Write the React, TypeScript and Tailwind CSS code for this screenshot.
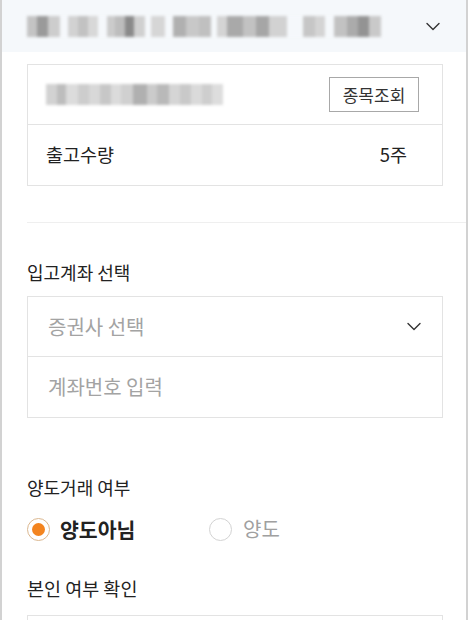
import React from "react";

type Cell = { w: number; c: string };

const headerCells: Cell[] = [
  { w: 9, c: "bg-[#c4c4c4]" }, { w: 10, c: "bg-[#9a9a9a]" }, { w: 11, c: "bg-[#cdcdcd]" }, { w: 8, c: "bg-[#f5f8fb]" },
  { w: 9, c: "bg-[#d2d2d2]" }, { w: 9, c: "bg-[#c2c2c2]" }, { w: 9, c: "bg-[#d8d8d8]" }, { w: 8, c: "bg-[#f5f8fb]" },
  { w: 8, c: "bg-[#cbcbcb]" }, { w: 9, c: "bg-[#bdbdbd]" }, { w: 8, c: "bg-[#8a8a8a]" }, { w: 10, c: "bg-[#d0d0d0]" }, { w: 6, c: "bg-[#f5f8fb]" },
  { w: 13, c: "bg-[#d6d6d6]" }, { w: 7, c: "bg-[#f5f8fb]" },
  { w: 12, c: "bg-[#b0b0b0]" }, { w: 12, c: "bg-[#c8c8c8]" }, { w: 11, c: "bg-[#c0c0c0]" }, { w: 5, c: "bg-[#f5f8fb]" },
  { w: 10, c: "bg-[#d4d4d4]" }, { w: 14, c: "bg-[#a9a9a9]" }, { w: 12, c: "bg-[#c2c2c2]" }, { w: 12, c: "bg-[#a6a6a6]" }, { w: 17, c: "bg-[#d2d2d2]" }, { w: 14, c: "bg-[#f5f8fb]" },
  { w: 11, c: "bg-[#c6c6c6]" }, { w: 10, c: "bg-[#d4d4d4]" }, { w: 8, c: "bg-[#f5f8fb]" },
  { w: 12, c: "bg-[#c2c2c2]" }, { w: 10, c: "bg-[#ababab]" }, { w: 10, c: "bg-[#939393]" }, { w: 11, c: "bg-[#c9c9c9]" },
];

const cardCells: Cell[] = [
  { w: 11, c: "bg-[#d2d2d2]" }, { w: 9, c: "bg-[#bdbdbd]" }, { w: 12, c: "bg-[#dcdcdc]" }, { w: 11, c: "bg-[#cdcdcd]" },
  { w: 11, c: "bg-[#d8d8d8]" }, { w: 11, c: "bg-[#c7c7c7]" }, { w: 10, c: "bg-[#dbdbdb]" }, { w: 12, c: "bg-[#d0d0d0]" },
  { w: 14, c: "bg-[#b0b0b0]" }, { w: 10, c: "bg-[#cbcbcb]" }, { w: 12, c: "bg-[#b9b9b9]" }, { w: 11, c: "bg-[#d5d5d5]" },
  { w: 11, c: "bg-[#c9c9c9]" }, { w: 11, c: "bg-[#dadada]" }, { w: 10, c: "bg-[#cecece]" }, { w: 11, c: "bg-[#dddddd]" },
];

function Mosaic({ cells, h, scale = 1 }: { cells: Cell[]; h: string; scale?: number }) {
  return (
    <div className={`flex ${h} blur-[1.8px]`}>
      {cells.map((cell, i) => (
        <div key={i} className={`${cell.c} h-full`} style={{ width: cell.w * scale }} />
      ))}
    </div>
  );
}

function Chevron({ className }: { className?: string }) {
  return (
    <svg width="14" height="9" viewBox="0 0 14 9" className={className} fill="none">
      <path d="M1 1.5 L7 7.5 L13 1.5" stroke="#333" strokeWidth="1.4" strokeLinecap="round" strokeLinejoin="round" />
    </svg>
  );
}

export default function App() {
  return (
    <div
      className="w-[470px] h-[620px] overflow-hidden bg-white text-[#222]"
      style={{ fontFamily: '"Noto Sans CJK KR", "Noto Sans", sans-serif' }}
    >
      <div className="w-[468px] h-full border-x-2 border-[#d2d2d2] flex flex-col">
        <div className="h-[52px] shrink-0 bg-[#f5f8fb] flex items-center justify-between pl-[25px] pr-[26px]">
          <Mosaic cells={headerCells} h="h-[21px]" scale={1.09} />
          <Chevron />
        </div>

        <div className="pl-[25px] flex flex-col">
          <div className="mt-[12px] mr-[23px] border border-[#e3e3e3]">
            <div className="h-[60px] flex items-center justify-between pl-[18px] pr-[23px] border-b border-[#e3e3e3]">
              <Mosaic cells={cardCells} h="h-[21px]" />
              <button className="w-[90px] h-[35px] border border-[#a8a8a8] text-[17px] text-[#333] flex items-center justify-center bg-white">
                종목조회
              </button>
            </div>
            <div className="h-[60px] flex items-center justify-between pl-[18px] pr-[35px] text-[18.5px]">
              <span>출고수량</span>
              <span>5주</span>
            </div>
          </div>

          <div className="mt-[36px] h-px bg-[#efefef]" />

          <div className="mt-[36px] h-[26px] flex items-center text-[18px]">입고계좌 선택</div>

          <div className="mt-[11px] mr-[23px] border border-[#e3e3e3]">
            <div className="h-[60px] flex items-center justify-between pl-[20px] pr-[21px] border-b border-[#e3e3e3] text-[20px] text-[#a3a3a3]">
              <span>증권사 선택</span>
              <Chevron />
            </div>
            <div className="h-[60px] flex items-center pl-[20px] text-[20px] text-[#a3a3a3]">
              <span>계좌번호 입력</span>
            </div>
          </div>

          <div className="mt-[56px] h-[26px] flex items-center text-[18px]">양도거래 여부</div>

          <div className="mt-[14px] h-[30px] flex items-center">
            <div className="flex items-center w-[182px]">
              <div className="w-[23px] h-[23px] rounded-full border-[1.5px] border-[#dbb78f] flex items-center justify-center">
                <div className="w-[13px] h-[13px] rounded-full bg-[#f3841f]" />
              </div>
              <span className="ml-[10px] text-[20.5px] font-bold">양도아님</span>
            </div>
            <div className="flex items-center">
              <div className="w-[23px] h-[23px] rounded-full border-[1.5px] border-[#d3d3d3]" />
              <span className="ml-[11px] text-[20px] text-[#a0a0a0]">양도</span>
            </div>
          </div>

          <div className="mt-[32px] h-[26px] flex items-center text-[18.5px]">본인 여부 확인</div>

          <div className="mt-[13px] mr-[23px] h-[60px] border border-[#e3e3e3]" />
        </div>
      </div>
    </div>
  );
}
